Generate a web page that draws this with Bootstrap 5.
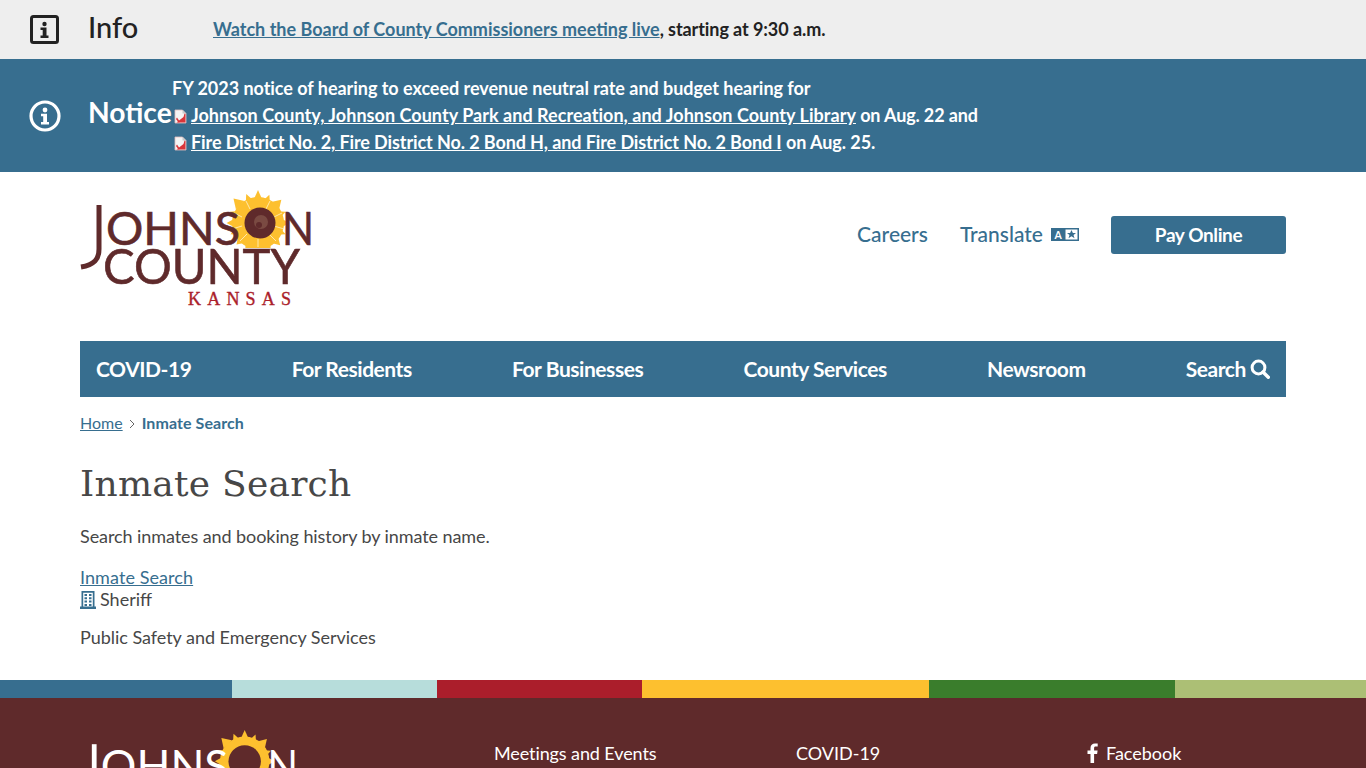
<!DOCTYPE html>
<html lang="en">
<head>
<meta charset="utf-8">
<title>Inmate Search</title>
<link href="https://cdn.jsdelivr.net/npm/bootstrap@5.3.0/dist/css/bootstrap.min.css" rel="stylesheet">
<style>
html,body{height:768px;overflow:hidden}
body{font-family:Lato,"Liberation Sans",sans-serif;font-size:18px;line-height:22px;color:#474747;background:#fff}
a{color:#376e8f}
.wrapx{padding-left:80px;padding-right:80px}
.alert-info-bar{height:59px;background:#eee;color:#222;font-weight:700;padding-bottom:2px}
.alert-ic{width:88px;padding-left:29px;flex:none}
.alert-lab{font-size:29px;font-weight:500;flex:none}
.alert-info-bar .alert-lab{width:125px;margin-top:-4px}
.alert-info-bar .alert-ic{margin-top:2px}
.tail-a{letter-spacing:-.08px}
.alert-notice-bar{height:113px;background:#376e8f;color:#fff;font-weight:700}
.alert-notice-bar a{color:#fff}
.alert-notice-bar .alert-lab{font-weight:700;width:84px;margin-top:-7px;font-size:28.200px}
.alert-lines{line-height:27px}
.ln-1{letter-spacing:-.03px}
.ln-2{letter-spacing:.04px}
.ln-2t{letter-spacing:-.15px}
.ln-3{letter-spacing:-.1px}
.ln-3t{letter-spacing:-.06px}
.pdf-ic{margin:0 4px 0 2px;vertical-align:-2px}
.head-zone{height:169px}
.logo-box{margin-top:16px}
.logo-t{font-family:Lato,sans-serif;fill:#5f2a2b;stroke:#5f2a2b;stroke-width:.6}
.logo-k{font-family:"Liberation Serif",serif;fill:#ab1e2b;stroke:#ab1e2b;stroke-width:.35}
.top-links{margin-top:44px;height:38px}
.top-lnk{font-size:21px;color:#376e8f;text-decoration:none;font-weight:500;margin-top:-2px}
.gap-tr{margin-left:32px}
.pay-btn{width:175px;height:38px;background:#376e8f;border:0;border-radius:3px;color:#fff;font-weight:700;font-size:19px;letter-spacing:-.4px;padding:0;line-height:38px;margin-left:32px}
.pay-btn:hover{background:#376e8f;color:#fff}
.main-nav{height:56px;background:#376e8f;padding:0 16px}
.main-lnk{color:#fff;text-decoration:none;font-weight:700;font-size:21px;letter-spacing:-.45px}
.crumbs{margin:16px 0 0;font-size:16px;line-height:20px;padding:0;list-style:none}
.crumbs li.now{color:#376e8f;font-weight:700;letter-spacing:.08px}
.crumb-sep{margin:0 7px 0 6px;vertical-align:0}
.pg-title{font-family:"DejaVu Serif",serif;font-size:36px;line-height:44px;font-weight:400;color:#474747;margin:29px 0 0;letter-spacing:.25px}
.pg-intro{margin:19px 0 0;letter-spacing:-.08px}
.res-block{margin:19px 0 0}
.res-lnk{letter-spacing:.08px}
.pg-cat{margin:16px 0 0;letter-spacing:-.03px}
.stripes{height:18px;margin-top:32px}
.st-a{width:232px;background:#376e8f}.st-b{width:205px;background:#b7dddb}.st-c{width:205px;background:#ab1e2b}
.st-d{width:287px;background:#fdc02f}.st-e{width:246px;background:#3a7d2c}.st-f{width:191px;background:#acbf75}
.foot{background:#5f2a2b;height:70px;color:#fff;position:relative}
.foot-logo{position:absolute;left:76px;top:30px}
.foot-t{font-family:Lato,sans-serif;fill:#fff}
.foot-lnk{position:absolute;top:44px;color:#fff;text-decoration:none}
.f1{left:494px;letter-spacing:-.1px}.f2{left:796px}.f3{left:1087px}
.fb-ic{vertical-align:-3px;margin-right:7px}
</style>
</head>
<body>
<svg width="0" height="0" class="position-absolute">
  <defs>
    <path id="petal" d="M-4-24 0-33 4-24z"/>
    <g id="flower" fill="#fdc02f">
      <circle r="26"/>
      <use href="#petal"/><use href="#petal" transform="rotate(22) scale(1,.92)"/><use href="#petal" transform="rotate(45) scale(1.400,1)"/><use href="#petal" transform="rotate(68) scale(1,.9)"/>
      <use href="#petal" transform="rotate(90) scale(1.200,.95)"/><use href="#petal" transform="rotate(112) scale(1,.9)"/><use href="#petal" transform="rotate(135) scale(1.300,.95)"/><use href="#petal" transform="rotate(158)"/>
      <use href="#petal" transform="rotate(180)"/><use href="#petal" transform="rotate(202)"/><use href="#petal" transform="rotate(225) scale(1.400,.92)"/><use href="#petal" transform="rotate(248) scale(1,.9)"/>
      <use href="#petal" transform="rotate(270) scale(1.200,.95)"/><use href="#petal" transform="rotate(292) scale(1,.92)"/><use href="#petal" transform="rotate(315) scale(1.500,1.050)"/><use href="#petal" transform="rotate(338) scale(1,.95)"/>
    </g>
    <clipPath id="flowerclip"><path d="M-40-40H40V25H-40z"/></clipPath>
    <path id="pdf-page" d="M1 1h7.500L12 4.500V14H1z"/>
    <g id="pdf-mark">
      <use href="#pdf-page" fill="#f4f4f4" stroke="#e3bcbc" stroke-width=".8"/>
      <path d="M8.500 1V4.500H12z" fill="#c9c9c9"/>
      <path d="M2.500 13.500 9.500 8l1-3.500 1 .5v8.500z" fill="#d9353a"/>
      <path d="M3 8.500 6 13 4.500 13.500 2 10z" fill="#d9353a"/>
    </g>
  </defs>
</svg>
<div class="alert-info-bar d-flex align-items-center">
  <div class="alert-ic"><svg width="31" height="31" viewBox="0 0 31 31" class="d-block"><rect x="2.500" y="2.500" width="26" height="26" rx="2" fill="none" stroke="#222" stroke-width="3"/><circle cx="15.500" cy="10" r="2.200" fill="#222"/><path d="M11.500 13.500h6v8h2v2.500h-8v-2.500h2.200v-5.500h-2.200z" fill="#222"/></svg></div>
  <div class="alert-lab">Info</div>
  <div><a href="#">Watch the Board of County Commissioners meeting live</a><span class="tail-a">, starting at 9:30 a.m.</span></div>
</div>
<div class="alert-notice-bar d-flex align-items-center">
  <div class="alert-ic"><svg width="32" height="32" viewBox="0 0 32 32" class="d-block"><circle cx="16" cy="16" r="14" fill="none" stroke="#fff" stroke-width="3.200"/><circle cx="16" cy="10" r="2.400" fill="#fff"/><path d="M12 13.800h6v8.200h2v2.400h-8v-2.400h2.200v-5.800H12z" fill="#fff"/></svg></div>
  <div class="alert-lab">Notice</div>
  <div class="alert-lines">
    <div class="ln-1">FY 2023 notice of hearing to exceed revenue neutral rate and budget hearing for</div>
    <div><svg class="pdf-ic" width="13" height="15" viewBox="0 0 13 15"><use href="#pdf-mark"/></svg><a class="ln-2" href="#">Johnson County, Johnson County Park and Recreation, and Johnson County Library</a><span class="ln-2t"> on Aug. 22 and</span></div>
    <div><svg class="pdf-ic" width="13" height="15" viewBox="0 0 13 15"><use href="#pdf-mark"/></svg><a class="ln-3" href="#">Fire District No. 2, Fire District No. 2 Bond H, and Fire District No. 2 Bond I</a><span class="ln-3t"> on Aug. 25.</span></div>
  </div>
</div>
<header class="head-zone wrapx d-flex justify-content-between align-items-start">
  <a href="#" class="logo-box d-block text-decoration-none">
    <svg width="236" height="124" viewBox="0 0 236 124" class="d-block">
      <g transform="translate(178,35)"><g clip-path="url(#flowerclip)"><use href="#flower"/>
        <path d="M-24-10-16-6M-26 6-16 3M-12-22-8-14M12-22 8-14M24-10 16-6M26 6 16 3M-18 18-11 11M18 18 11 11M0 24V16" stroke="#fff3c9" stroke-width=".8"/></g></g>
      <g transform="translate(180,35)">
        <circle r="15.500" fill="#5f2a2b"/>
        <circle cx="1" cy="-1" r="7" fill="#7a4a42"/>
        <circle cx="-1" cy="2" r="3" fill="#5f2a2b"/>
      </g>
      <path d="M19 17v44c0 5-1 9-4 12s-8 5-14 6" fill="none" stroke="#5f2a2b" stroke-width="5"/>
      <text class="logo-t" x="26" y="57" font-size="46" textLength="134" lengthAdjust="spacingAndGlyphs">OHNS</text>
      <text class="logo-t" x="202" y="57" font-size="46" textLength="32" lengthAdjust="spacingAndGlyphs">N</text>
      <text class="logo-t" x="23" y="96" font-size="49" textLength="197" lengthAdjust="spacingAndGlyphs">COUNTY</text>
      <text class="logo-k" x="108" y="117" font-size="18" textLength="103">KANSAS</text>
    </svg>
  </a>
  <div class="top-links d-flex align-items-center">
    <a class="top-lnk" href="#">Careers</a>
    <a class="top-lnk gap-tr d-flex align-items-center" href="#">Translate
      <svg class="ms-2" width="28" height="13" viewBox="0 0 28 13"><path d="M0 0h28v13H0z" fill="#376e8f"/><path d="M14.500 1.500h12v10h-12z" fill="#fff"/><text x="3.500" y="10.500" font-size="10.500" font-weight="700" fill="#fff" font-family="Lato,sans-serif">A</text><path d="M20.500 2l1.400 3h3.100l-2.500 2 1 3.200-3-1.900-3 1.900 1-3.200-2.500-2h3.100z" fill="#376e8f"/></svg>
    </a>
    <a class="btn pay-btn" href="#">Pay Online</a>
  </div>
</header>
<div class="wrapx">
  <nav class="main-nav d-flex justify-content-between align-items-center">
    <a class="main-lnk" href="#">COVID-19</a>
    <a class="main-lnk" href="#">For Residents</a>
    <a class="main-lnk" href="#">For Businesses</a>
    <a class="main-lnk" href="#">County Services</a>
    <a class="main-lnk" href="#">Newsroom</a>
    <a class="main-lnk d-flex align-items-center" href="#">Search<svg class="ms-1" width="20" height="20" viewBox="0 0 20 20"><circle cx="8.500" cy="8.500" r="6.400" fill="none" stroke="#fff" stroke-width="3"/><path d="M13 13l5.300 5.300" stroke="#fff" stroke-width="3.400" stroke-linecap="round"/></svg></a>
  </nav>
  <ul class="crumbs d-flex align-items-center">
    <li><a href="#">Home</a></li>
    <li><svg class="crumb-sep" width="6" height="10" viewBox="0 0 6 10"><path d="M1 1l4 4-4 4" fill="none" stroke="#666" stroke-width="1"/></svg></li>
    <li class="now">Inmate Search</li>
  </ul>
  <h1 class="pg-title">Inmate Search</h1>
  <p class="pg-intro">Search inmates and booking history by inmate name.</p>
  <div class="res-block">
    <div><a class="res-lnk" href="#">Inmate Search</a></div>
    <div><svg width="16" height="18" viewBox="0 0 16 18" style="vertical-align:-3px"><path fill-rule="evenodd" fill="#376e8f" d="M0 15.500h1.500V0h13v15.500H16V18H0zM3.200 1.700v13.800h9.600V1.700z"/><path fill="#376e8f" d="M4.500 3h2.500v2H4.500zM9 3h2.500v2H9zM4.500 6.300h2.500v2H4.500zM9 6.300h2.500v2H9zM4.500 9.600h2.500v2H4.500zM9 9.600h2.500v2H9zM4.500 12.900h2.500v2H4.500zM9 12.900h2.500v2H9z"/></svg><span class="ms-1">Sheriff</span></div>
  </div>
  <p class="pg-cat">Public Safety and Emergency Services</p>
</div>
<div class="stripes d-flex">
  <div class="st-a"></div><div class="st-b"></div><div class="st-c"></div><div class="st-d"></div><div class="st-e"></div><div class="st-f"></div>
</div>
<footer class="foot">
  <svg class="foot-logo" width="225" height="40" viewBox="0 0 236 42">
    <g transform="translate(177,35)"><use href="#flower"/><circle r="17" fill="#5f2a2b"/></g>
    <path d="M19 17v25" fill="none" stroke="#fff" stroke-width="5"/>
    <text class="foot-t" x="26" y="57" font-size="46" textLength="134" lengthAdjust="spacingAndGlyphs">OHNS</text>
    <text class="foot-t" x="201" y="57" font-size="46" textLength="32" lengthAdjust="spacingAndGlyphs">N</text>
  </svg>
  <a class="foot-lnk f1" href="#">Meetings and Events</a>
  <a class="foot-lnk f2" href="#">COVID-19</a>
  <a class="foot-lnk f3" href="#"><svg class="fb-ic" width="12" height="20" viewBox="0 0 12 20"><path fill="#fff" d="M3.500 20v-9H.500V7.500h3V5c0-3 1.800-4.600 4.500-4.600 1.300 0 2.400.1 2.700.1v3.100H8.800c-1.400 0-1.700.7-1.700 1.700v2.200h3.500L10.100 11H7.100v9z"/></svg>Facebook</a>
</footer>
<script src="https://cdn.jsdelivr.net/npm/bootstrap@5.3.0/dist/js/bootstrap.bundle.min.js"></script>
</body>
</html>
